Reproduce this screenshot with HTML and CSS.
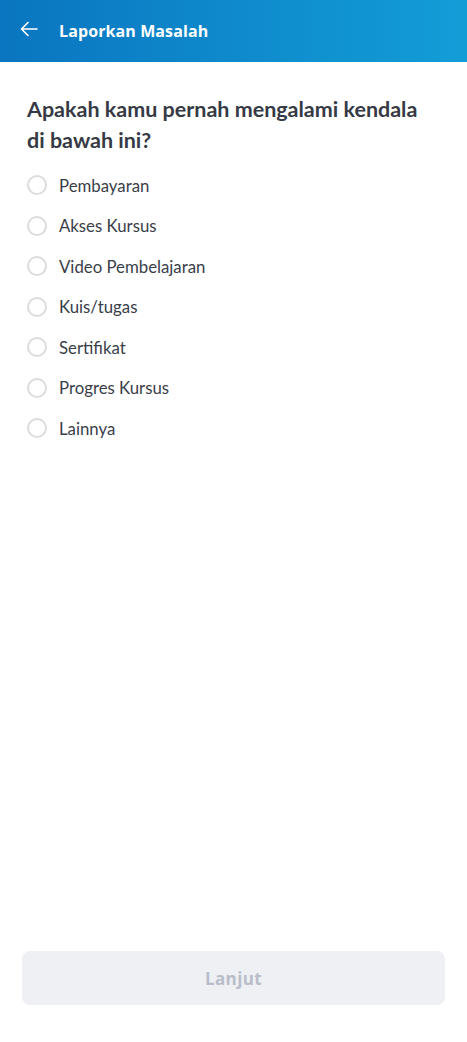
FILE: index.html
```html
<!DOCTYPE html>
<html lang="id">
<head>
<meta charset="utf-8">
<title>Laporkan Masalah</title>
<link rel="stylesheet" href="styles.css">
</head>
<body>
<div class="page">
  <header class="appbar">
    <button class="back" aria-label="Kembali">
      <svg width="18" height="16" viewBox="0 0 18 16" fill="none" stroke="#fff" stroke-width="1.6" stroke-linecap="round" stroke-linejoin="round"><path d="M17 8H1.5M8 1.5L1.5 8L8 14.5"/></svg>
    </button>
    <h1 class="title">Laporkan Masalah</h1>
  </header>
  <main class="content">
    <h2 class="question">Apakah kamu pernah mengalami kendala di bawah ini?</h2>
    <ul class="options">
      <li class="option"><span class="radio"></span><span class="label">Pembayaran</span></li>
      <li class="option"><span class="radio"></span><span class="label">Akses Kursus</span></li>
      <li class="option"><span class="radio"></span><span class="label">Video Pembelajaran</span></li>
      <li class="option"><span class="radio"></span><span class="label">Kuis/tugas</span></li>
      <li class="option"><span class="radio"></span><span class="label">Sertifikat</span></li>
      <li class="option"><span class="radio"></span><span class="label">Progres Kursus</span></li>
      <li class="option"><span class="radio"></span><span class="label">Lainnya</span></li>
    </ul>
  </main>
  <footer class="footer">
    <button class="next" disabled>Lanjut</button>
  </footer>
</div>
</body>
</html>
```

FILE: styles.css
```css
* { box-sizing: border-box; }
html, body { margin: 0; padding: 0; background: #fff; }
body { font-family: "Lato", "Noto Sans", sans-serif; }
.page {
  width: 467px;
  height: 1042px;
  display: flex;
  flex-direction: column;
}
.appbar {
  height: 62px;
  flex: none;
  display: flex;
  align-items: center;
  padding-left: 20px;
  background: linear-gradient(90deg, #0a75c0 0%, #0f8ccd 55%, #139dd7 100%);
}
.back {
  background: none;
  border: 0;
  padding: 0;
  width: 18px;
  height: 16px;
  display: flex;
  margin-top: -4px;
}
.title {
  margin: 0 0 0 21px;
  font-family: "Open Sans", sans-serif;
  font-weight: 700;
  font-size: 16px;
  color: #fff;
  letter-spacing: 0.1px;
  margin-top: -1px;
}
.content {
  flex: 1;
  padding: 32px 27px 0 27px;
}
.question {
  margin: 0 0 9px 0;
  font-size: 21.5px;
  line-height: 31px;
  font-weight: 700;
  color: #363a45;
  width: 400px;
}
.options {
  list-style: none;
  margin: 0;
  padding: 0;
}
.option {
  height: 40.5px;
  display: flex;
  align-items: center;
}
.radio {
  width: 20px;
  height: 20px;
  border-radius: 50%;
  border: 2px solid #dcdcdf;
  flex: none;
}
.label {
  margin-left: 12px;
  font-size: 16.8px;
  color: #3a3e49;
}
.footer {
  flex: none;
  padding: 0 22px 37px 22px;
}
.next {
  width: 100%;
  height: 54px;
  border: 0;
  border-radius: 8px;
  background: #eff0f4;
  color: #b9bdc9;
  font-family: "Open Sans", sans-serif;
  font-weight: 700;
  font-size: 17px;
  letter-spacing: 0.4px;
}
```
